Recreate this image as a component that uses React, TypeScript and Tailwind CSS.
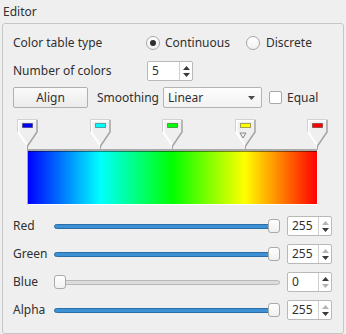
import React from "react"

const stops = [
  { pos: "left-[0%]", color: "#0000ff" },
  { pos: "left-[25%]", color: "#00ffff" },
  { pos: "left-[50%]", color: "#00ff00" },
  { pos: "left-[75%]", color: "#ffff00", selected: true },
  { pos: "left-[100%]", color: "#ff0000" },
]

const channels = [
  { label: "Red", value: 255 },
  { label: "Green", value: 255 },
  { label: "Blue", value: 0 },
  { label: "Alpha", value: 255 },
]

function Arrows({ upOn = true, downOn = true }: { upOn?: boolean; downOn?: boolean }) {
  return (
    <div className="w-[13px] h-full border-l border-[#cfcfcf] flex flex-col items-center justify-center gap-[3px]">
      <svg width="7" height="4" viewBox="0 0 7 4">
        <polygon points="0,4 7,4 3.5,0" fill={upOn ? "#3a3a3a" : "#b4b4b4"} />
      </svg>
      <svg width="7" height="4" viewBox="0 0 7 4">
        <polygon points="0,0 7,0 3.5,4" fill={downOn ? "#3a3a3a" : "#b4b4b4"} />
      </svg>
    </div>
  )
}

function SpinBox({ value, width, upOn, downOn }: { value: number; width: string; upOn?: boolean; downOn?: boolean }) {
  return (
    <div className={`${width} h-[20px] flex items-center bg-white border border-[#b9b9b9] rounded-[2px]`}>
      <span className="flex-1 pl-[4px]">{value}</span>
      <Arrows upOn={upOn} downOn={downOn} />
    </div>
  )
}

function Marker({ color, selected }: { color: string; selected?: boolean }) {
  return (
    <svg width="21" height="30" viewBox="0 0 21 30">
      <polygon points="1,1 20,1 20,13 10.5,27 1,13" fill="#efefef" />
      <polyline points="10.5,27 1.5,13.5 1.5,1.5 19.5,1.5" fill="none" stroke="#ffffff" strokeWidth="2" />
      <polyline points="0.5,13 0.5,0.5 20.5,0.5" fill="none" stroke="#d2d2d2" strokeWidth="1" />
      <polyline points="20,1 20,13 10.5,27" fill="none" stroke="#a4a4a4" strokeWidth="1.5" />
      <rect x="5.5" y="4.5" width="10" height="4" fill={color} stroke="rgba(0,0,0,0.35)" strokeWidth="1" />
      {selected && <polygon points="5,14 11,14 8,19" fill="none" stroke="#8a8a8a" strokeWidth="1" />}
      <line x1="10.5" y1="26" x2="10.5" y2="30" stroke="#a4a4a4" strokeWidth="1" />
    </svg>
  )
}

function Slider({ value }: { value: number }) {
  const left = Math.round((value / 255) * 214)
  const on = value > 0
  return (
    <div className="relative w-[226px] h-[20px]">
      <div
        className={`absolute left-0 right-0 top-[8px] h-[5px] rounded-full border ${
          on ? "bg-[#3d90d4] border-[#2b6fa9]" : "bg-[#dcdcdc] border-[#b8b8b8]"
        }`}
      />
      <div
        className="absolute top-[3px] w-[12px] h-[14px] rounded-[3px] border border-[#a9a9a9] bg-gradient-to-b from-white to-[#f0f0f0]"
        style={{ left }}
      />
    </div>
  )
}

export default function App() {
  return (
    <div className="w-[346px] h-[334px] bg-[#efefef] font-['Noto_Sans',sans-serif] text-[12px] text-[#303030] leading-[16px]">
      <div className="h-[23px] pl-[3px] pt-[4px]">Editor</div>
      <div className="ml-[2px] w-[342px] h-[311px] border border-[#c6c6c6] rounded-[3px] pl-[10px] pr-[10px]">
        {/* Color table type */}
        <div className="mt-[8px] h-[22px] flex items-center">
          <span className="w-[133px]">Color table type</span>
          <div className="w-[14px] h-[14px] rounded-full border border-[#a6a6a6] bg-gradient-to-b from-white to-[#f1f1f1] flex items-center justify-center">
            <div className="w-[6px] h-[6px] rounded-full bg-[#2e2e2e]" />
          </div>
          <span className="ml-[5px] w-[81px]">Continuous</span>
          <div className="w-[14px] h-[14px] rounded-full border border-[#a6a6a6] bg-gradient-to-b from-white to-[#f1f1f1]" />
          <span className="ml-[6px]">Discrete</span>
        </div>

        {/* Number of colors */}
        <div className="mt-[6px] h-[22px] flex items-center">
          <span className="w-[134px]">Number of colors</span>
          <SpinBox value={5} width="w-[46px]" />
        </div>

        {/* Align / Smoothing */}
        <div className="mt-[5px] h-[21px] flex items-center">
          <button className="w-[75px] h-[21px] border border-[#b0b0b0] rounded-[2px] bg-gradient-to-b from-[#fafafa] to-[#ebebeb]">
            Align
          </button>
          <span className="ml-[9px] w-[66px]">Smoothing</span>
          <div className="w-[99px] h-[21px] border border-[#b4b4b4] rounded-[2px] bg-gradient-to-b from-[#fdfdfd] to-[#f2f2f2] flex items-center pl-[4px] pr-[6px]">
            <span className="flex-1">Linear</span>
            <svg width="7" height="4" viewBox="0 0 7 4">
              <polygon points="0,0 7,0 3.5,4" fill="#4a4a4a" />
            </svg>
          </div>
          <div className="ml-[7px] w-[13px] h-[13px] border border-[#a9a9a9] rounded-[2px] bg-white" />
          <span className="ml-[5px]">Equal</span>
        </div>

        {/* Markers */}
        <div className="relative mt-[11px] ml-[14px] w-[290px] h-[30px]">
          {stops.map((s) => (
            <div key={s.color} className={`absolute top-0 -ml-[10px] ${s.pos}`}>
              <Marker color={s.color} selected={s.selected} />
            </div>
          ))}
        </div>

        {/* Gradient bar */}
        <div className="ml-[14px] w-[291px] h-[56px] border-t-2 border-t-[#a9a9a9] border-l border-l-[#a9a9a9] border-r border-r-white border-b border-b-white">
          <div className="w-full h-full bg-[linear-gradient(to_right,#0000ff,#00ffff,#00ff00,#ffff00,#ff0000)] shadow-[inset_0_1px_0_rgba(0,0,0,0.45)]" />
        </div>

        {/* Channels */}
        <div className="mt-[11px] flex flex-col gap-[8px]">
          {channels.map((c) => (
            <div key={c.label} className="h-[20px] flex items-center">
              <span className="w-[41px]">{c.label}</span>
              <Slider value={c.value} />
              <div className="ml-[7px]">
                <SpinBox value={c.value} width="w-[45px]" upOn={c.value < 255} downOn={c.value > 0} />
              </div>
            </div>
          ))}
        </div>
      </div>
    </div>
  )
}
